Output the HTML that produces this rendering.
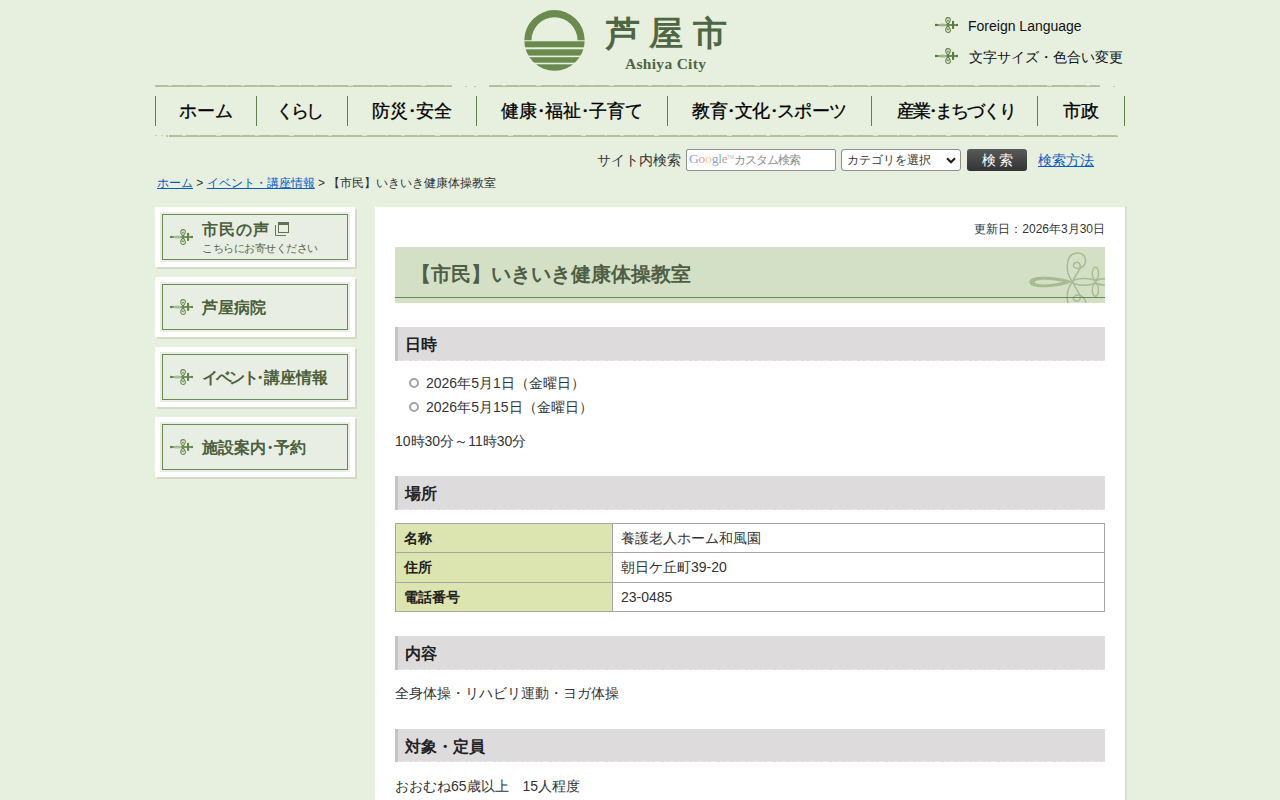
<!DOCTYPE html>
<html lang="ja"><head><meta charset="utf-8"><title>【市民】いきいき健康体操教室</title>
<style>
html,body{margin:0;padding:0;}
body{width:1280px;height:800px;overflow:hidden;background:#e7efdf;font-family:"Liberation Sans",sans-serif;color:#333;position:relative;}
.abs{position:absolute;}
/* header */
#logo{left:524px;top:10px;width:61px;height:61px;}
#cityname{left:606px;top:12px;font-family:"Liberation Serif",serif;font-size:34px;font-weight:bold;letter-spacing:9.3px;color:#4f6642;line-height:44px;white-space:nowrap;}
#cityen{left:625px;top:54px;font-family:"Liberation Serif",serif;font-size:15.5px;font-weight:bold;color:#4f6642;line-height:20px;white-space:nowrap;letter-spacing:0.3px}
.hlink{left:935px;height:20px;white-space:nowrap;font-size:14px;color:#111;line-height:20px;}
.hlink svg{position:absolute;left:0;top:0px;}
.hlink span{position:absolute;left:33px;top:0;}
/* nav */
.nline{height:2px;background:linear-gradient(#b3c0a0,#b3c0a0) 0 1px/100% 1px no-repeat,repeating-linear-gradient(90deg,#b3c0a0 0 13px,#d3dcc6 13px 17px,#b3c0a0 17px 29px,#c5cfb6 29px 31px,#b3c0a0 31px 47px,#dbe3d0 47px 52px,#b3c0a0 52px 71px,#cbd4bd 71px 73px) 0 0/100% 1px no-repeat;}
.ndiv{width:1px;top:96px;height:30px;background:#62804b;}
.nitem{top:99px;height:24px;line-height:24px;font-size:18px;color:#000;-webkit-text-stroke:0.3px #000;text-align:center;white-space:nowrap;}
.d{margin:0 -5px;}
/* search */
#slabel{left:597px;top:150px;font-size:14px;line-height:20px;color:#333;white-space:nowrap;}
#sinput{left:686px;top:149px;width:148px;height:20px;border:1px solid #8f8f8f;border-radius:2px;background:#fff;}
#ssel{left:841px;top:149px;width:118px;height:20px;border:1px solid #8f8f8f;border-radius:3px;background:#fff;}
.gg{position:absolute;left:2px;top:-1px;font-family:"Liberation Serif",serif;font-size:13.5px;letter-spacing:-0.2px;line-height:20px;}
.gg b{font-weight:normal;}
.tm{position:absolute;left:40px;top:4px;font-size:5px;line-height:6px;color:#bbb;}
.ph{position:absolute;left:47px;top:0;font-size:11.5px;letter-spacing:-1px;line-height:20px;color:#8c8c8c;white-space:nowrap;}
.st{position:absolute;left:5px;top:0;font-size:12px;line-height:20px;color:#333;white-space:nowrap;}
#sbtn{left:967px;top:149px;width:60px;height:22px;border-radius:3px;background:linear-gradient(#5a5a5a,#333);color:#fff;font-size:14px;line-height:22px;text-align:center;letter-spacing:3px;text-indent:3px;}
#shelp{left:1038px;top:150px;font-size:14px;line-height:20px;color:#0b5ac2;text-decoration:underline;white-space:nowrap;}
#crumb{left:157px;top:174px;font-size:12px;line-height:18px;color:#333;white-space:nowrap;}
#crumb a{color:#0b5ac2;text-decoration:underline;}
/* sidebar */
.sbox{left:155px;width:200px;height:60px;background:#fff;box-shadow:2px 2px 0 #d4dbcb;}
.sbox .in{position:absolute;left:5px;top:5px;width:186px;height:46px;border:2px solid #e9eee4;background:#e9eee4;}
.sbox .bd{position:absolute;left:7px;top:7px;width:184px;height:44px;border:1px solid #6b8a50;}
.sbox svg{position:absolute;left:15px;top:21px;}
.d2{margin:0 -4px;}
.sbox .t2{position:absolute;left:47px;top:33px;font-size:11px;line-height:16px;color:#55684a;white-space:nowrap;letter-spacing:-0.5px}
.sbox .t{position:absolute;left:47px;top:20px;font-family:"Liberation Serif",serif;font-size:16px;font-weight:bold;color:#4b5f3d;line-height:22px;white-space:nowrap;}
/* main */
#main{left:375px;top:207px;width:750px;height:600px;background:#fff;box-shadow:1px 0 0 #d3dbcb,2px 0 0 #d8e0d0;}
#updated{right:20px;top:13px;font-size:12px;line-height:18px;color:#333;white-space:nowrap;}
#title{left:20px;top:40px;width:710px;height:56px;background:#d4e0c6;overflow:hidden;}
#title .line{position:absolute;left:0;top:50px;width:710px;height:1px;background:#6a8a4e;}
#title h1{position:absolute;left:16px;top:12px;margin:0;font-size:20px;font-weight:bold;color:#4f5e45;line-height:30px;white-space:nowrap;}
.h2{left:20px;width:707px;height:34px;background:#dedbdd;border-left:3px solid #c7c4c7;}
.h2:after{content:"";position:absolute;left:0;right:0;bottom:0;height:1px;background:repeating-linear-gradient(90deg,#e9e7e9 0 3px,#dedbdd 3px 5px,#ebe9eb 5px 11px,#dedbdd 11px 14px);}
.h2 span{position:absolute;left:7px;top:7px;font-size:16px;font-weight:bold;color:#222;line-height:22px;white-space:nowrap;}
.txt{left:20px;font-size:14px;line-height:24px;color:#333;white-space:nowrap;}
.li{left:51px;font-size:14px;line-height:24px;color:#333;white-space:nowrap;}
.bul{left:34px;width:6px;height:6px;border:2px solid #a3a3a3;border-radius:50%;}
table{position:absolute;left:20px;top:316px;width:710px;border-collapse:collapse;font-size:14px;color:#333;}
td,th{border:1px solid #a6a6a6;height:28px;padding:0 8px;text-align:left;line-height:20px;}
th{background:#dce4b0;width:200px;font-weight:bold;color:#222;}
</style></head>
<body>
<!-- logo -->
<svg id="logo" class="abs" viewBox="0 0 61 61" width="61" height="61">
 <defs><clipPath id="cc"><circle cx="30.5" cy="30.5" r="30.2"/></clipPath></defs>
 <path d="M0.3,30.3 A30.2,30.2 0 0 1 60.7,30.3 L53.5,30.3 A23,23 0 0 0 7.5,30.3 Z" fill="#6a8a4e"/>
 <g clip-path="url(#cc)" fill="#6a8a4e">
  <rect x="0" y="31.3" width="61" height="6"/>
  <rect x="0" y="39.3" width="61" height="6.3"/>
  <rect x="0" y="47.2" width="61" height="5.5"/>
  <rect x="0" y="54.3" width="61" height="7"/>
 </g>
</svg>
<div id="cityname" class="abs">芦屋市</div>
<div id="cityen" class="abs">Ashiya City</div>

<svg width="0" height="0" style="position:absolute">
 <defs>
  <g id="orn">
   <path d="M0.3,9 L23,9" stroke="#587a40" stroke-width="1.7"/>
   <ellipse cx="7.5" cy="9" rx="4" ry="1.5" fill="#9fb48c"/>
   <rect x="0" y="7.9" width="2.2" height="2.2" fill="#587a40"/>
   <rect x="21" y="7.9" width="2" height="2.2" fill="#587a40"/>
   <path d="M13,8.3 C11.4,6.8 10.5,5 10.7,3.6 C10.9,2.3 11.9,1.6 13.1,1.6 C14.4,1.6 15.5,2.5 15.4,3.8 C15.3,5.3 14.2,6.8 13,8.3 Z" fill="none" stroke="#587a40" stroke-width="1.05"/>
   <path d="M12,4.2 L14,3.6 L13,6.6 Z" fill="#587a40"/>
   <path d="M13,9.7 C11.4,11.2 10.5,13 10.7,14.4 C10.9,15.7 11.9,16.4 13.1,16.4 C14.4,16.4 15.5,15.5 15.4,14.2 C15.3,12.7 14.2,11.2 13,9.7 Z" fill="none" stroke="#587a40" stroke-width="1.05"/>
   <path d="M12,13.8 L14,14.4 L13,11.4 Z" fill="#587a40"/>
   <rect x="17" y="4.9" width="2.1" height="8" fill="#587a40"/>
  </g>
  <g id="orn2">
   <path d="M0.3,9 L23,9" stroke="#628549" stroke-width="1.7"/>
   <ellipse cx="7.5" cy="9" rx="4" ry="1.5" fill="#a9bd98"/>
   <rect x="0" y="7.9" width="2.2" height="2.2" fill="#628549"/>
   <rect x="21" y="7.9" width="2" height="2.2" fill="#628549"/>
   <path d="M13,8.3 C11.4,6.8 10.5,5 10.7,3.6 C10.9,2.3 11.9,1.6 13.1,1.6 C14.4,1.6 15.5,2.5 15.4,3.8 C15.3,5.3 14.2,6.8 13,8.3 Z" fill="none" stroke="#628549" stroke-width="1.05"/>
   <path d="M12,4.2 L14,3.6 L13,6.6 Z" fill="#628549"/>
   <path d="M13,9.7 C11.4,11.2 10.5,13 10.7,14.4 C10.9,15.7 11.9,16.4 13.1,16.4 C14.4,16.4 15.5,15.5 15.4,14.2 C15.3,12.7 14.2,11.2 13,9.7 Z" fill="none" stroke="#628549" stroke-width="1.05"/>
   <path d="M12,13.8 L14,14.4 L13,11.4 Z" fill="#628549"/>
   <rect x="17" y="4.9" width="2.1" height="8" fill="#628549"/>
  </g>
 </defs>
</svg>

<div class="abs hlink" style="top:16px"><svg width="24" height="18"><use href="#orn"/></svg><span>Foreign Language</span></div>
<div class="abs hlink" style="top:47px"><svg width="24" height="18"><use href="#orn"/></svg><span style="left:34px">文字サイズ・色合い変更</span></div>

<!-- nav -->
<div class="abs nline" style="left:155px;top:85px;width:297px"></div>
<div class="abs nline" style="left:489px;top:85px;width:611px"></div>
<div class="abs" style="left:465px;top:86px;width:2px;height:1px;background:#b9c5a8"></div>
<div class="abs" style="left:474px;top:86px;width:2px;height:1px;background:#b9c5a8"></div>
<div class="abs" style="left:1113px;top:86px;width:2px;height:1px;background:#b9c5a8"></div>
<div class="abs nline" style="left:169px;top:135px;width:949px"></div>
<div class="abs" style="left:155px;top:135px;width:2px;height:1px;background:#c3ceb4"></div>
<div class="abs" style="left:161px;top:135px;width:2px;height:1px;background:#c3ceb4"></div>
<div class="abs" style="left:166px;top:135px;width:2px;height:2px;background:#bac6aa"></div>
<div class="abs ndiv" style="left:155px"></div>
<div class="abs ndiv" style="left:256px"></div>
<div class="abs ndiv" style="left:347px"></div>
<div class="abs ndiv" style="left:476px"></div>
<div class="abs ndiv" style="left:667px"></div>
<div class="abs ndiv" style="left:871px"></div>
<div class="abs ndiv" style="left:1037px"></div>
<div class="abs ndiv" style="left:1124px"></div>
<div class="abs nitem" style="left:156px;width:100px">ホーム</div>
<div class="abs nitem" style="left:257px;width:90px;letter-spacing:-3px;text-indent:-6.6px">くらし</div>
<div class="abs nitem" style="left:348px;width:128px">防災<span class="d">・</span>安全</div>
<div class="abs nitem" style="left:477px;width:190px">健康<span class="d">・</span>福祉<span class="d">・</span>子育て</div>
<div class="abs nitem" style="left:668px;width:203px;letter-spacing:-0.6px">教育<span class="d">・</span>文化<span class="d">・</span>スポーツ</div>
<div class="abs nitem" style="left:872px;width:165px;letter-spacing:-2px;text-indent:2px">産業<span class="d">・</span>まちづくり</div>
<div class="abs nitem" style="left:1038px;width:86px">市政</div>

<!-- search -->
<div id="slabel" class="abs">サイト内検索</div>
<div id="sinput" class="abs"><span class="gg"><b style="color:#86a5e0">G</b><b style="color:#e39a90">o</b><b style="color:#e9cf7c">o</b><b style="color:#86a5e0">g</b><b style="color:#86c286">l</b><b style="color:#e39a90">e</b></span><span class="tm">TM</span><span class="ph">カスタム検索</span></div>
<div id="ssel" class="abs"><span class="st">カテゴリを選択</span><svg style="position:absolute;right:4px;top:7px" width="10" height="7" viewBox="0 0 10 7"><path d="M1,1.2 L5,5.2 L9,1.2" fill="none" stroke="#222" stroke-width="2.2"/></svg></div>
<div id="sbtn" class="abs">検索</div>
<div id="shelp" class="abs">検索方法</div>
<div id="crumb" class="abs"><a>ホーム</a> &gt; <a>イベント・講座情報</a> &gt; 【市民】いきいき健康体操教室</div>

<!-- sidebar -->
<div class="abs sbox" style="top:207px"><div class="in"></div><div class="bd"></div><svg width="24" height="18"><use href="#orn2"/></svg><div class="t" style="top:12px;letter-spacing:1px">市民の声</div>
 <svg style="left:120px;top:15px" width="15" height="15" viewBox="0 0 15 15"><path d="M0.5,3 V13.5 H11" fill="none" stroke="#66775a" stroke-width="1"/><rect x="3.5" y="0.5" width="10" height="10" fill="none" stroke="#5f7150" stroke-width="1"/><rect x="3" y="0" width="11" height="3" fill="#5f7150"/></svg>
 <div class="t2">こちらにお寄せください</div></div>
<div class="abs sbox" style="top:277px"><div class="in"></div><div class="bd"></div><svg width="24" height="18"><use href="#orn2"/></svg><div class="t">芦屋病院</div></div>
<div class="abs sbox" style="top:347px"><div class="in"></div><div class="bd"></div><svg width="24" height="18"><use href="#orn2"/></svg><div class="t"><span style="letter-spacing:-2.5px">イベント</span><span class="d2">・</span>講座情報</div></div>
<div class="abs sbox" style="top:417px"><div class="in"></div><div class="bd"></div><svg width="24" height="18"><use href="#orn2"/></svg><div class="t">施設案内<span class="d2">・</span>予約</div></div>

<!-- main -->
<div id="main" class="abs">
 <div id="updated" class="abs">更新日：2026年3月30日</div>
 <div id="title" class="abs"><svg style="position:absolute;left:0;top:0" width="710" height="56" viewBox="395 247 710 56">
 <g fill="none" stroke="#a7bb93" stroke-width="1.5">
  <path d="M1072.5,281.75 C1068,276 1066.5,270 1067.5,263 C1068.5,256 1073,253 1078,253 C1083,253 1086,257 1085.5,261.5 C1085,266 1081,268.5 1078,268.5 C1075,268.5 1073,266.5 1073.5,264.5 C1074,262.5 1077,261.5 1079,263 C1081,265 1080,269 1078,272 C1076,275 1074,278 1072.5,281.75"/>
  <path d="M1072.5,281.75 C1068,287.5 1066.5,293.5 1067.5,300.5 C1068.5,307.5 1073,310.5 1078,310.5 C1083,310.5 1086,306.5 1085.5,302 C1085,297.5 1081,295 1078,295 C1075,295 1073,297 1073.5,299 C1074,301 1077,302 1079,300.5 C1081,298.5 1080,294.5 1078,291.5 C1076,288.5 1074,285.5 1072.5,281.75"/>
  <ellipse cx="1084" cy="281.9" rx="11.5" ry="3.3"/>
  <ellipse cx="1095.4" cy="273.5" rx="3.1" ry="6.2"/>
  <ellipse cx="1095.4" cy="290" rx="3.1" ry="6.2"/>
  <ellipse cx="1106" cy="281.9" rx="10.5" ry="3.1"/>
 </g>
 <path fill="#a7bb93" fill-rule="evenodd" d="M1073,281.8 C1060,276.5 1040,275.8 1033,278 C1028,280 1028,284 1033,286 C1040,288.5 1060,287.5 1073,281.8 Z M1063,281.8 C1052,279.6 1042,279.2 1037,280.5 C1034,281.5 1034,283 1037,283.8 C1042,285 1052,284.5 1063,281.8 Z"/>
</svg><div class="line"></div><h1>【市民】いきいき健康体操教室</h1></div>
 <div class="abs h2" style="top:120px"><span>日時</span></div>
 <div class="abs bul" style="top:171px"></div>
 <div class="abs li" style="top:164px">2026年5月1日（金曜日）</div>
 <div class="abs bul" style="top:195px"></div>
 <div class="abs li" style="top:188px">2026年5月15日（金曜日）</div>
 <div class="abs txt" style="top:222px">10時30分～11時30分</div>
 <div class="abs h2" style="top:269px"><span>場所</span></div>
 <table>
  <tr><th>名称</th><td>養護老人ホーム和風園</td></tr>
  <tr><th style="height:28px;padding-bottom:1px">住所</th><td style="padding-bottom:1px">朝日ケ丘町39-20</td></tr>
  <tr><th>電話番号</th><td>23-0485</td></tr>
 </table>
 <div class="abs h2" style="top:429px"><span>内容</span></div>
 <div class="abs txt" style="top:474px">全身体操・リハビリ運動・ヨガ体操</div>
 <div class="abs h2" style="top:522px;height:33px"><span>対象・定員</span></div>
 <div class="abs txt" style="top:567px">おおむね65歳以上　15人程度</div>
</div>
</body></html>
